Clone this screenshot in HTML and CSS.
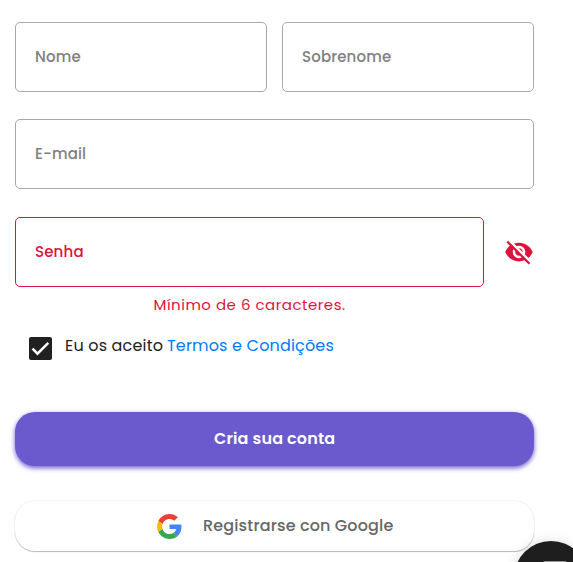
FILE: index.html
```html
<!DOCTYPE html>
<html lang="pt">
<head>
<meta charset="utf-8">
<title>Cria sua conta</title>
<link rel="stylesheet" href="styles.css">
</head>
<body>
<form class="signup">
  <div class="names">
    <div class="field"><span class="label">Nome</span></div>
    <div class="field"><span class="label">Sobrenome</span></div>
  </div>
  <div class="field email-field"><span class="label">E-mail</span></div>
  <div class="password">
    <div class="field invalid"><span class="label">Senha</span></div>
    <svg class="eye" viewBox="0 0 24 24"><path d="M12 7c2.76 0 5 2.24 5 5 0 .65-.13 1.26-.36 1.83l2.92 2.92c1.51-1.26 2.7-2.89 3.43-4.75-1.73-4.39-6-7.5-11-7.5-1.4 0-2.74.25-3.98.7l2.16 2.16C10.74 7.13 11.35 7 12 7zM2 4.27l2.28 2.28.46.46C3.08 8.3 1.78 10.02 1 12c1.73 4.39 6 7.5 11 7.5 1.55 0 3.03-.3 4.38-.84l.42.42L19.73 22 21 20.73 3.27 3 2 4.27zM7.53 9.8l1.55 1.55c-.05.21-.08.43-.08.65 0 1.66 1.34 3 3 3 .22 0 .44-.03.65-.08l1.55 1.55c-.67.33-1.41.53-2.2.53-2.76 0-5-2.24-5-5 0-.79.2-1.53.53-2.2zm4.31-.78l3.15 3.15.02-.16c0-1.66-1.34-3-3-3l-.17.01z"/></svg>
  </div>
  <div class="error"><span>Mínimo de 6 caracteres.</span></div>
  <div class="terms">
    <svg class="check" viewBox="0 0 23 23"><rect width="23" height="23" rx="2"/><path d="M3.5 11.7l5 5L19.3 5.9"/></svg>
    <span class="accept">Eu os aceito</span>
    <a class="link">Termos e Condições</a>
  </div>
  <button type="button" class="create"><span>Cria sua conta</span></button>
  <button type="button" class="google">
    <svg class="logo" viewBox="0 0 48 48"><path fill="#EA4335" d="M24 9.5c3.54 0 6.71 1.22 9.21 3.6l6.85-6.85C35.9 2.38 30.47 0 24 0 14.62 0 6.51 5.38 2.56 13.22l7.98 6.19C12.43 13.72 17.74 9.5 24 9.5z"/><path fill="#4285F4" d="M46.98 24.55c0-1.57-.15-3.09-.38-4.55H24v9.02h12.94c-.58 2.96-2.26 5.48-4.78 7.18l7.73 6c4.51-4.18 7.09-10.36 7.09-17.65z"/><path fill="#FBBC05" d="M10.53 28.59c-.48-1.45-.76-2.99-.76-4.59s.27-3.14.76-4.59l-7.98-6.19C.92 16.46 0 20.12 0 24c0 3.88.92 7.54 2.56 10.78l7.97-6.19z"/><path fill="#34A853" d="M24 48c6.48 0 11.93-2.13 15.89-5.81l-7.73-6c-2.15 1.45-4.92 2.3-8.16 2.3-6.26 0-11.57-4.22-13.47-9.91l-7.98 6.19C6.51 42.62 14.62 48 24 48z"/></svg>
    <span>Registrarse con Google</span>
  </button>
</form>
<div class="overlay"><div class="chat"><span class="chat-icon"></span></div></div>
</body>
</html>
```
FILE: styles.css
```css
* { box-sizing: border-box; }
html, body { height: 100%; }
body {
  margin: 0;
  position: relative;
  background: #fff;
  font-family: Poppins, Inter, "Open Sans", sans-serif;
}
.signup {
  width: 534px;
  padding: 22px 0 0 15px;
  display: flex;
  flex-direction: column;
}
.names { display: grid; grid-template-columns: 1fr 1fr; gap: 15px; }
.field {
  height: 70px;
  border: 1px solid #a9a9a9;
  border-radius: 5px;
  padding: 0 19px;
  display: flex;
  align-items: center;
}
.label { font-size: 15px; font-weight: 500; letter-spacing: .15px; color: #808080; line-height: 20px; white-space: nowrap; }
.email-field { margin-top: 27px; }
.password { margin-top: 28px; display: flex; align-items: center; }
.password .field { width: 469px; }
.invalid { border-color: #dc143c; }
.invalid .label { color: #dc143c; }
.eye { width: 30px; height: 30px; margin-left: 20px; fill: #dc143c; flex: none; }
.error {
  height: 20px;
  margin-top: 8px;
  padding-left: 138.5px;
  font-size: 15px;
  letter-spacing: .5px;
  line-height: 20px;
  color: #dc143c;
  white-space: nowrap;
}
.terms {
  height: 26px;
  margin-top: 19px;
  padding-left: 14px;
  display: flex;
  font-size: 16px;
  letter-spacing: .17px;
  line-height: 24px;
  color: #212121;
  white-space: nowrap;
}
.check { width: 23px; height: 23px; margin: 3px 13px 0 0; flex: none; }
.check rect { fill: #212121; }
.check path { fill: none; stroke: #fff; stroke-width: 2.5; }
.accept { width: 102px; flex: none; }
.link { color: #007bff; }
.create, .google {
  border: 0;
  padding: 0;
  font-family: inherit;
  font-size: 16px;
  letter-spacing: .14px;
  line-height: 24px;
  display: flex;
  align-items: center;
  white-space: nowrap;
}
.create {
  height: 54px;
  margin-top: 52px;
  padding-left: 199px;
  border-radius: 20px;
  background: #6a5acd;
  box-shadow: 0 2px 5px #6a5acd;
  color: #fff;
  font-weight: 600;
}
.google {
  height: 50px;
  margin-top: 35px;
  padding: 0 0 0 142px;
  border-radius: 20px;
  background: #fff;
  box-shadow: 0 1px 1px rgba(0, 0, 0, .25), 0 0 0 1px rgba(0, 0, 0, .04);
  color: #666;
  font-weight: 500;
}
.google span { padding-bottom: 1px; }
.logo { width: 25px; height: 25px; margin: 1px 21px 0 0; flex: none; }
.overlay { position: absolute; inset: 0; overflow: hidden; pointer-events: none; }
.chat {
  position: absolute;
  left: 514px;
  top: 541px;
  width: 74px;
  height: 74px;
  border-radius: 50%;
  background: #1e1e1e;
  box-shadow: 0 2px 14px rgba(0, 0, 0, .18);
  display: flex;
  justify-content: center;
  padding: 20px 0 0 8px;
}
.chat-icon { width: 24px; height: 24px; border-radius: 2px; background: #999; }
```
